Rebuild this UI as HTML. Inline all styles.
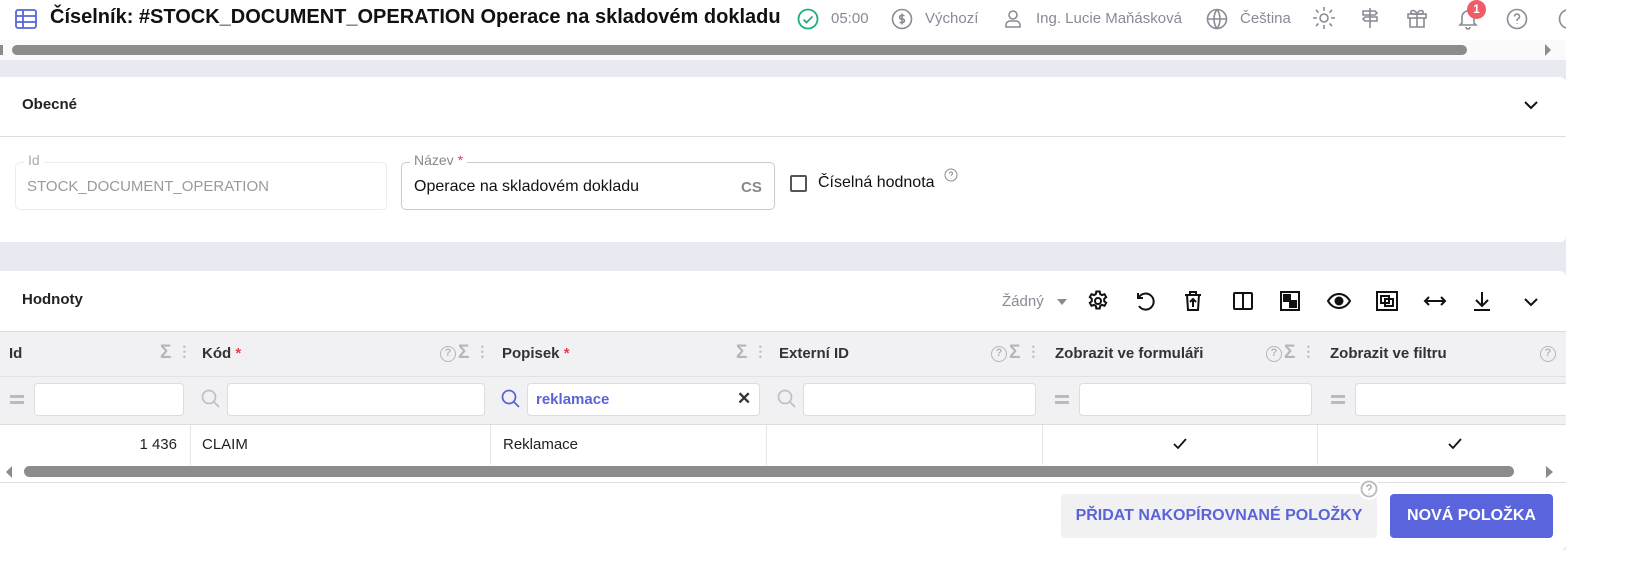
<!DOCTYPE html>
<html><head><meta charset="utf-8"><style>
*{box-sizing:border-box;margin:0;padding:0}
body{width:1628px;height:572px;overflow:hidden;background:#fff;font-family:"Liberation Sans",sans-serif;position:relative;color:#222}
.a{position:absolute}
.ic{position:absolute;fill:none;stroke:#8a8a96;stroke-width:1.6}
.gray{color:#8a8a96}
.hdr{font-weight:bold;font-size:15px;color:#333;top:345px}
.inp{position:absolute;top:383px;height:33px;background:#fff;border:1px solid #ddd;border-radius:4px}
.vl{position:absolute;width:1px;background:#e6e6ea}
.tb{position:absolute;top:289px;stroke:#111;stroke-width:2;fill:none}
.q{display:inline-block;width:16px;height:16px;border:1.8px solid #b5b5bb;border-radius:50%;font-size:11px;line-height:13px;text-align:center;vertical-align:2px;margin-right:2px}
</style></head><body>
<!-- top header -->
<svg class="a" style="left:14px;top:8px" width="24" height="22" viewBox="0 0 24 22"><rect x="2" y="2" width="20" height="18" rx="2" fill="none" stroke="#5a64d8" stroke-width="1.8"/><path d="M2 8H22M2 14H22M9 2V20" stroke="#5a64d8" stroke-width="1.8"/></svg>
<div class="a" style="left:50px;top:6px;font-size:20px;font-weight:bold;color:#111">Číselník: #STOCK_DOCUMENT_OPERATION Operace na skladovém dokladu</div>
<svg class="a" style="left:796px;top:7px" width="24" height="24"><circle cx="12" cy="12" r="9.5" fill="none" stroke="#1bb07a" stroke-width="1.8"/><path d="M7.5 12.5l3 3 6-6" fill="none" stroke="#1bb07a" stroke-width="1.8"/></svg>
<div class="a gray" style="left:831px;top:10px;font-size:15px">05:00</div>
<svg class="ic" style="left:890px;top:7px" width="24" height="24"><circle cx="12" cy="12" r="9.5"/><path d="M14.5 8.5h-3.5a1.8 1.8 0 0 0 0 3.5h2a1.8 1.8 0 0 1 0 3.5h-3.5M12 6.5v11"/></svg>
<div class="a gray" style="left:925px;top:10px;font-size:15px">Výchozí</div>
<svg class="ic" style="left:1002px;top:7px" width="22" height="24"><circle cx="11" cy="8" r="4"/><path d="M4 20v-2a4 4 0 0 1 4-4h6a4 4 0 0 1 4 4v2z"/></svg>
<div class="a gray" style="left:1036px;top:10px;font-size:15px">Ing. Lucie Maňásková</div>
<svg class="ic" style="left:1205px;top:7px" width="24" height="24"><circle cx="12" cy="12" r="9.5"/><path d="M2.5 12h19M12 2.5c-4 5-4 14 0 19M12 2.5c4 5 4 14 0 19"/></svg>
<div class="a gray" style="left:1240px;top:10px;font-size:15px">Čeština</div>
<svg class="ic" style="left:1311px;top:5px" width="26" height="26"><circle cx="13" cy="13" r="4"/><path d="M13 2v4M13 20v4M2 13h4M20 13h4M5 5l2.5 2.5M18.5 18.5l2.5 2.5M5 21l2.5-2.5M18.5 7.5l2.5-2.5"/></svg>
<svg class="ic" style="left:1358px;top:6px" width="24" height="24"><path d="M12 2v20M5 5h12l2 2-2 2H5zM19 11H7l-2 2 2 2h12z"/></svg>
<svg class="ic" style="left:1405px;top:6px" width="24" height="24"><rect x="3" y="8" width="18" height="4"/><path d="M5 12v9h14v-9M12 8v13M12 8c-2-5-7-4-6-1 1 2 6 1 6 1M12 8c2-5 7-4 6-1-1 2-6 1-6 1"/></svg>
<svg class="ic" style="left:1456px;top:6px" width="24" height="26"><path d="M6 17V11a6 6 0 0 1 12 0v6l2 2H4zM10 21a2 2 0 0 0 4 0"/></svg>
<div class="a" style="left:1467px;top:0;width:19px;height:19px;border-radius:50%;background:#ef5b66;color:#fff;font-size:12px;font-weight:bold;text-align:center;line-height:19px">1</div>
<svg class="ic" style="left:1505px;top:7px" width="24" height="24"><circle cx="12" cy="12" r="9.5"/><path d="M9.5 9.5a2.5 2.5 0 1 1 3.5 2.3c-.7.4-1 1-1 1.7v.5M12 16.5v.5"/></svg>
<svg class="ic" style="left:1552px;top:7px" width="20" height="24"><path d="M14 3a9.5 9.5 0 0 0 0 18"/></svg>
<!-- top scrollbar -->
<div class="a" style="left:0;top:40px;width:1566px;height:20px;background:#fafafa"></div>
<div class="a" style="left:0;top:45px;width:3px;height:10px;background:#8c8c8c"></div>
<div class="a" style="left:12px;top:45px;width:1455px;height:10px;border-radius:5px;background:#8c8c8c"></div>
<div class="a" style="left:1545px;top:44px;width:0;height:0;border-left:6px solid #8c8c8c;border-top:6px solid transparent;border-bottom:6px solid transparent"></div>
<div class="a" style="left:0;top:60px;width:1566px;height:490px;background:#e9e9f1"></div>
<!-- card1 -->
<div class="a" style="left:0;top:77px;width:1566px;height:165px;background:#fff;border-radius:0 6px 6px 0"></div>
<div class="a" style="left:22px;top:96px;font-size:15px;font-weight:bold;color:#222">Obecné</div>
<svg class="a" style="left:1522px;top:99px" width="18" height="12"><path d="M3 3l6 6 6-6" fill="none" stroke="#111" stroke-width="2"/></svg>
<div class="a" style="left:0;top:136px;width:1566px;height:1px;background:#ddd"></div>
<div class="a" style="left:15px;top:162px;width:372px;height:48px;border:1px solid #ececec;border-radius:5px"></div>
<div class="a" style="left:24px;top:152px;background:#fff;padding:0 4px;font-size:14px;color:#aaa">Id</div>
<div class="a" style="left:27px;top:178px;font-size:15px;color:#9a9a9a">STOCK_DOCUMENT_OPERATION</div>
<div class="a" style="left:401px;top:162px;width:374px;height:48px;border:1px solid #c9c9cf;border-radius:5px"></div>
<div class="a" style="left:410px;top:152px;background:#fff;padding:0 4px;font-size:14px;color:#888">Název <span style="color:#e04050">*</span></div>
<div class="a" style="left:414px;top:178px;font-size:16px;color:#111">Operace na skladovém dokladu</div>
<div class="a" style="left:741px;top:179px;font-size:15px;font-weight:bold;color:#888">CS</div>
<div class="a" style="left:790px;top:175px;width:17px;height:17px;border:2px solid #555;border-radius:2px"></div>
<div class="a" style="left:818px;top:174px;font-size:16px;color:#111">Číselná hodnota</div>
<svg class="ic" style="left:944px;top:168px;stroke-width:1" width="14" height="14"><circle cx="7" cy="7" r="6"/><path d="M5.5 5.5a1.5 1.5 0 1 1 2 1.4c-.4.2-.5.5-.5.9M7 10v.4"/></svg>
<!-- card2 -->
<div class="a" style="left:0;top:271px;width:1566px;height:279px;background:#fff;border-radius:0 6px 6px 0"></div>
<div class="a" style="left:22px;top:291px;font-size:15px;font-weight:bold;color:#222">Hodnoty</div>
<div class="a" style="left:1002px;top:293px;font-size:15px;color:#8a8a96">Žádný</div>
<div class="a" style="left:1057px;top:299px;border-top:6px solid #8a8a96;border-left:5px solid transparent;border-right:5px solid transparent"></div>
<svg class="tb" style="left:1086px" width="24" height="24" viewBox="0 0 24 24"><circle cx="12" cy="12" r="3"/><path d="M10.3 2.5h3.4l.5 2.6 1.8 1 2.5-.9 1.7 2.9-2 1.7v2.4l2 1.7-1.7 2.9-2.5-.9-1.8 1-.5 2.6h-3.4l-.5-2.6-1.8-1-2.5.9-1.7-2.9 2-1.7V9.8l-2-1.700 1.7-2.9 2.5.9 1.8-1z"/></svg>
<svg class="tb" style="left:1133px" width="24" height="24"><path d="M5 4v5h5M5.5 9A8 8 0 1 1 6 17"/></svg>
<svg class="tb" style="left:1181px" width="24" height="24"><path d="M4 6h16M9 6V3h6v3M6 6l1 15h10l1-15M12 18v-8M9 13l3-3 3 3"/></svg>
<svg class="tb" style="left:1231px" width="24" height="24"><rect x="3" y="4" width="18" height="16" rx="1"/><path d="M12 4v16"/></svg>
<svg class="tb" style="left:1278px" width="24" height="24"><rect x="3" y="3" width="18" height="18"/><rect x="6" y="6" width="6" height="6" fill="#111"/><rect x="12" y="12" width="6" height="6" fill="#111"/></svg>
<svg class="tb" style="left:1326px" width="26" height="24"><path d="M2 12c3-5 7-7 11-7s8 2 11 7c-3 5-7 7-11 7s-8-2-11-7z"/><circle cx="13" cy="12" r="3.5" fill="#111"/></svg>
<svg class="tb" style="left:1374px" width="26" height="24"><rect x="3" y="3" width="20" height="18"/><rect x="7" y="7" width="8" height="7"/><rect x="11" y="10" width="8" height="7"/></svg>
<svg class="tb" style="left:1422px" width="26" height="24"><path d="M3 12h20M7 8l-4 4 4 4M19 8l4 4-4 4"/></svg>
<svg class="tb" style="left:1470px" width="24" height="24"><path d="M12 3v14M6 11l6 6 6-6M4 21h16"/></svg>
<svg class="a" style="left:1522px;top:296px" width="18" height="12"><path d="M3 3l6 6 6-6" fill="none" stroke="#111" stroke-width="2"/></svg>
<!-- table -->
<div class="a" style="left:0;top:331px;width:1566px;height:1px;background:#ddd"></div>
<div class="a" style="left:0;top:332px;width:1566px;height:92px;background:#f1f1f4"></div>
<div class="a" style="left:0;top:376px;width:1566px;height:1px;background:#e2e2e6"></div>
<div class="a" style="left:0;top:424px;width:1566px;height:1px;background:#ddd"></div>
<div class="a hdr" style="left:9px">Id</div>
<div class="a hdr" style="left:202px">Kód <span style="color:#e04050">*</span></div>
<div class="a hdr" style="left:502px">Popisek <span style="color:#e04050">*</span></div>
<div class="a hdr" style="left:779px">Externí ID</div>
<div class="a hdr" style="left:1055px">Zobrazit ve formuláři</div>
<div class="a hdr" style="left:1330px">Zobrazit ve filtru</div>
<div class="a" style="left:160px;top:342px;font-size:19px;color:#b5b5bb;font-weight:bold">Σ<span style="font-size:14px;margin-left:6px;vertical-align:2px">⋮</span></div>
<div class="a" style="left:440px;top:342px;font-size:19px;color:#b5b5bb;font-weight:bold"><span class="q">?</span>Σ<span style="font-size:14px;margin-left:6px;vertical-align:2px">⋮</span></div>
<div class="a" style="left:736px;top:342px;font-size:19px;color:#b5b5bb;font-weight:bold">Σ<span style="font-size:14px;margin-left:6px;vertical-align:2px">⋮</span></div>
<div class="a" style="left:991px;top:342px;font-size:19px;color:#b5b5bb;font-weight:bold"><span class="q">?</span>Σ<span style="font-size:14px;margin-left:6px;vertical-align:2px">⋮</span></div>
<div class="a" style="left:1266px;top:342px;font-size:19px;color:#b5b5bb;font-weight:bold"><span class="q">?</span>Σ<span style="font-size:14px;margin-left:6px;vertical-align:2px">⋮</span></div>
<div class="a" style="left:1540px;top:342px;font-size:19px;color:#b5b5bb;font-weight:bold"><span class="q">?</span></div>
<!-- filters -->
<div class="a" style="left:10px;top:395px;width:14px;height:3px;background:#bbb;box-shadow:0 6px 0 #bbb"></div>
<div class="inp" style="left:34px;width:150px"></div>
<svg class="a" style="left:200px;top:388px" width="22" height="22"><circle cx="9" cy="9" r="6.5" fill="none" stroke="#c0c0c5" stroke-width="1.8"/><path d="M14 14l5 5" stroke="#c0c0c5" stroke-width="1.8"/></svg>
<div class="inp" style="left:227px;width:258px"></div>
<svg class="a" style="left:500px;top:388px" width="22" height="22"><circle cx="9" cy="9" r="6.5" fill="none" stroke="#5a64d8" stroke-width="1.8"/><path d="M14 14l5 5" stroke="#5a64d8" stroke-width="1.8"/></svg>
<div class="inp" style="left:527px;width:233px"></div>
<div class="a" style="left:536px;top:391px;font-size:15px;font-weight:bold;color:#5a64d8">reklamace</div>
<div class="a" style="left:737px;top:389px;font-size:17px;font-weight:bold;color:#333">✕</div>
<svg class="a" style="left:776px;top:388px" width="22" height="22"><circle cx="9" cy="9" r="6.5" fill="none" stroke="#c0c0c5" stroke-width="1.8"/><path d="M14 14l5 5" stroke="#c0c0c5" stroke-width="1.8"/></svg>
<div class="inp" style="left:803px;width:233px"></div>
<div class="a" style="left:1055px;top:395px;width:14px;height:3px;background:#bbb;box-shadow:0 6px 0 #bbb"></div>
<div class="inp" style="left:1079px;width:233px"></div>
<div class="a" style="left:1331px;top:395px;width:14px;height:3px;background:#bbb;box-shadow:0 6px 0 #bbb"></div>
<div class="inp" style="left:1355px;width:211px;border-right:none;border-radius:4px 0 0 4px"></div>
<!-- data row -->
<div class="vl" style="left:190px;top:425px;height:40px"></div>
<div class="vl" style="left:490px;top:425px;height:40px"></div>
<div class="vl" style="left:766px;top:425px;height:40px"></div>
<div class="vl" style="left:1042px;top:425px;height:40px"></div>
<div class="vl" style="left:1317px;top:425px;height:40px"></div>
<div class="a" style="left:100px;top:436px;width:77px;text-align:right;font-size:15px">1 436</div>
<div class="a" style="left:202px;top:436px;font-size:15px">CLAIM</div>
<div class="a" style="left:503px;top:436px;font-size:15px">Reklamace</div>
<svg class="a" style="left:1172px;top:437px" width="16" height="14"><path d="M2 7l4 4 8-9" fill="none" stroke="#111" stroke-width="1.8"/></svg>
<svg class="a" style="left:1447px;top:437px" width="16" height="14"><path d="M2 7l4 4 8-9" fill="none" stroke="#111" stroke-width="1.8"/></svg>
<!-- table scrollbar -->
<div class="a" style="left:6px;top:466px;border-right:6px solid #8c8c8c;border-top:6px solid transparent;border-bottom:6px solid transparent"></div>
<div class="a" style="left:24px;top:466px;width:1490px;height:11px;border-radius:6px;background:#8c8c8c"></div>
<div class="a" style="left:1546px;top:466px;border-left:7px solid #8c8c8c;border-top:6px solid transparent;border-bottom:6px solid transparent"></div>
<div class="a" style="left:0;top:482px;width:1566px;height:1px;background:#ddd"></div>
<!-- buttons -->
<div class="a" style="left:1061px;top:494px;width:316px;height:44px;background:#f1f1f4;border-radius:4px;color:#5a64d8;font-size:16px;font-weight:bold;text-align:center;line-height:44px">PŘIDAT NAKOPÍROVNANÉ POLOŽKY</div>
<div class="a" style="left:1358px;top:478px;width:22px;height:22px;border-radius:50%;background:#fff"></div>
<svg class="ic" style="left:1360px;top:480px;stroke:#bbb;stroke-width:1.8" width="18" height="18"><circle cx="9" cy="9" r="7.5"/><path d="M7 7a2 2 0 1 1 2.8 1.8c-.5.3-.8.7-.8 1.3v.4M9 13v.5"/></svg>
<div class="a" style="left:1390px;top:494px;width:163px;height:44px;background:#5a64dc;border-radius:4px;color:#fff;font-size:16px;font-weight:bold;text-align:center;line-height:44px">NOVÁ POLOŽKA</div>
</body></html>
